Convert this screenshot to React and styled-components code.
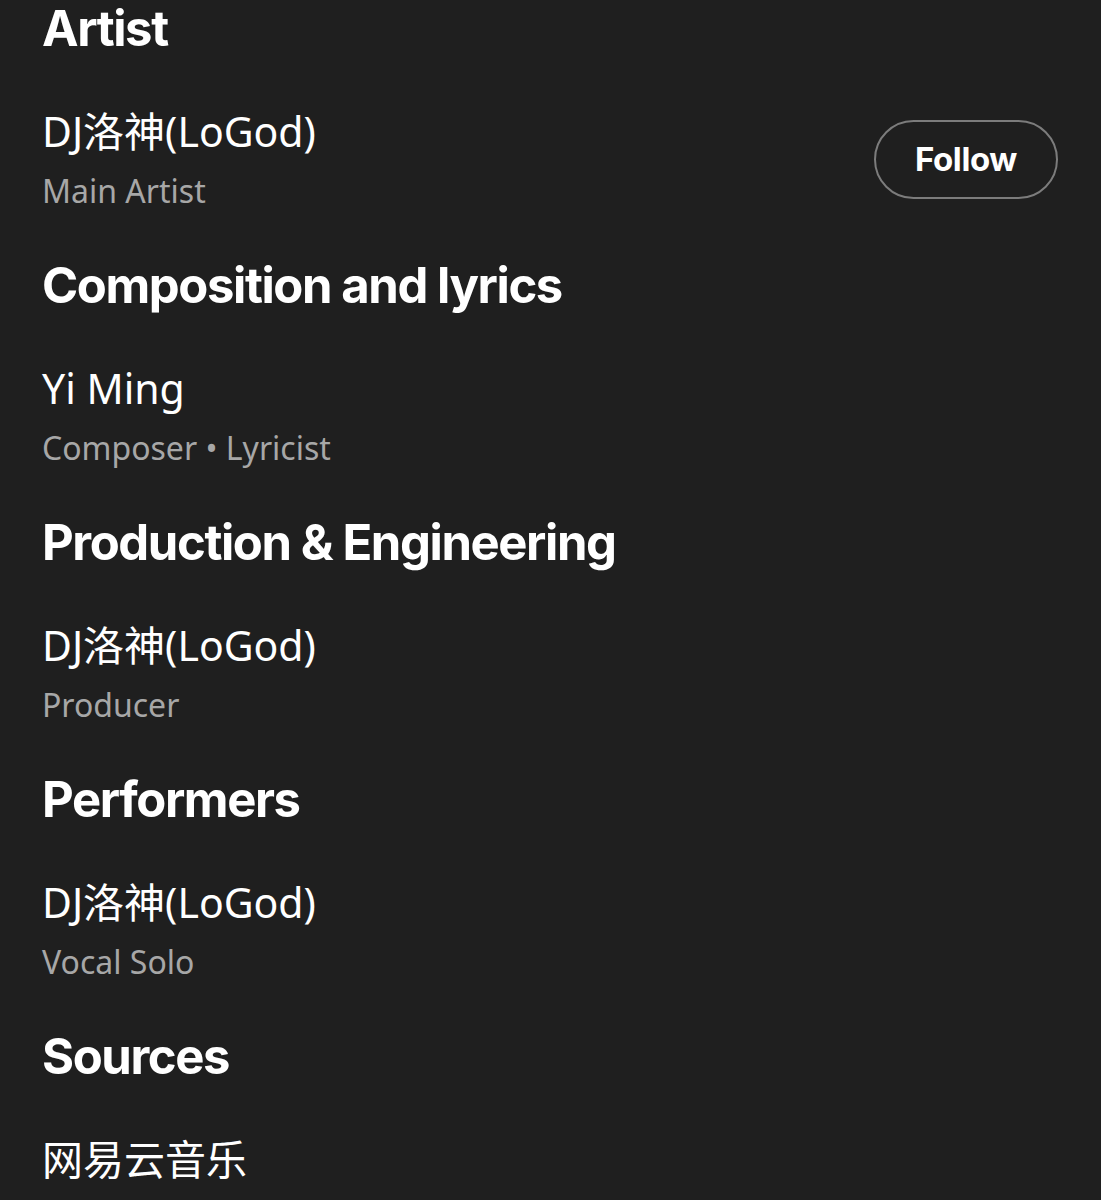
import React from "react";
import styled, { createGlobalStyle } from "styled-components";

const Global = createGlobalStyle`
  html, body { margin: 0; padding: 0; background: #1f1f1f; }
  body { font-family: "Noto Sans", "Noto Sans CJK SC", sans-serif; color: #fff; }
`;

const Page = styled.div`
  background: #1f1f1f;
  min-height: 1200px;
  padding: 1px 43px 0 42px;
  box-sizing: border-box;
`;

const Section = styled.section`
  display: flex;
  flex-direction: column;
`;

const Heading = styled.h2`
  margin: 0;
  font-family: Inter, "Noto Sans CJK SC", sans-serif;
  font-weight: 700;
  font-size: 49px;
  letter-spacing: -1.4px;
  line-height: 56px;
  color: #fff;
`;

const Row = styled.div`
  display: flex;
  align-items: center;
  justify-content: space-between;
  margin-top: 48px;
  margin-bottom: 45px;
`;

const Credit = styled.div`
  display: flex;
  flex-direction: column;
`;

const Name = styled.div`
  font-family: "Noto Sans", "Noto Sans CJK SC", sans-serif;
  font-size: 41px;
  line-height: 52px;
  color: #fff;
`;

const Role = styled.div`
  font-family: "Noto Sans", "Noto Sans CJK SC", sans-serif;
  font-size: 32px;
  line-height: 44px;
  margin-top: 12px;
  color: #a7a7a7;
`;

const FollowButton = styled.button`
  width: 184px;
  height: 79px;
  padding: 0;
  border: 2px solid #7c7c7c;
  border-radius: 40px;
  background: transparent;
  color: #fff;
  font-family: Inter, sans-serif;
  font-weight: 700;
  font-size: 33px;
  letter-spacing: -0.4px;
  cursor: pointer;
`;

const sections = [
  { title: "Artist", name: "DJ洛神(LoGod)", role: "Main Artist", follow: true },
  { title: "Composition and lyrics", name: "Yi Ming", role: "Composer • Lyricist" },
  { title: "Production & Engineering", name: "DJ洛神(LoGod)", role: "Producer" },
  { title: "Performers", name: "DJ洛神(LoGod)", role: "Vocal Solo" },
  { title: "Sources", name: "网易云音乐" },
];

export default function App() {
  return (
    <>
      <Global />
      <Page>
        {sections.map((s) => (
          <Section key={s.title}>
            <Heading>{s.title}</Heading>
            <Row>
              <Credit>
                <Name>{s.name}</Name>
                {s.role && <Role>{s.role}</Role>}
              </Credit>
              {s.follow && <FollowButton>Follow</FollowButton>}
            </Row>
          </Section>
        ))}
      </Page>
    </>
  );
}
